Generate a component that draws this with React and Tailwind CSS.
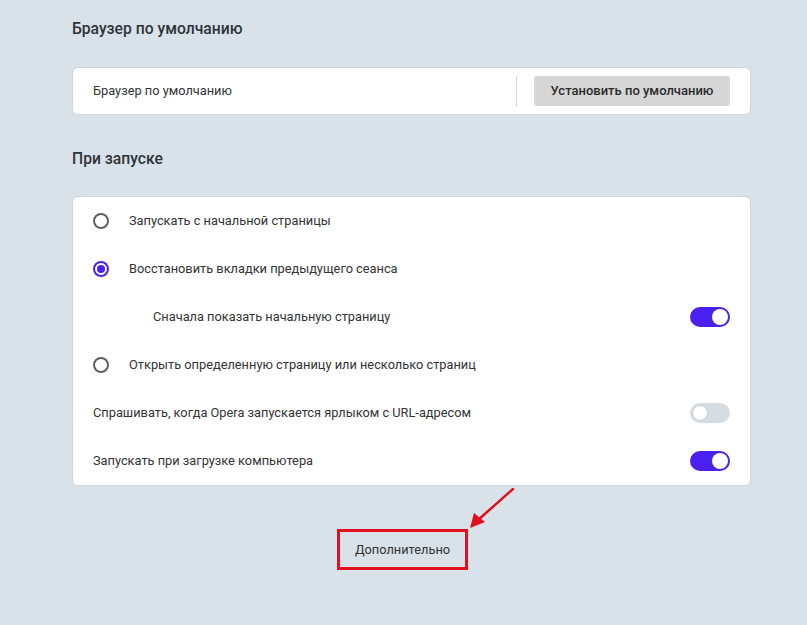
import React from "react";

function Radio({ checked }) {
  return (
    <span
      className={
        "flex items-center justify-center w-[16px] h-[16px] rounded-full border-2 " +
        (checked ? "border-[#4b22ec]" : "border-[#5f5f5f]")
      }
    >
      {checked && <span className="w-[8px] h-[8px] rounded-full bg-[#4b22ec]" />}
    </span>
  );
}

function Toggle({ on }) {
  return (
    <span
      className={
        "flex items-center w-[40px] h-[20px] rounded-full px-[2px] " +
        (on ? "bg-[#4a1ff0] justify-end" : "bg-[#d5dce2] justify-start")
      }
    >
      <span
        className={
          "w-[16px] h-[16px] rounded-full bg-white " +
          (on ? "" : "border border-[#c9d0d6]")
        }
      />
    </span>
  );
}

function Row({ children, right }) {
  return (
    <div className="h-[48px] flex items-center pr-[20px]">
      <div className="flex-1 flex items-center">{children}</div>
      {right}
    </div>
  );
}

export default function App() {
  return (
    <div
      className="relative w-[807px] h-[625px] bg-[#d9e2e9] text-[#333] overflow-hidden"
      style={{ fontFamily: 'Roboto, "Noto Sans", sans-serif' }}
    >
      <div className="ml-[72px] w-[679px] pt-[18px]">
        <h2 className="text-[15.7px] leading-[22px] font-medium text-[#2f3338]">
          Браузер по умолчанию
        </h2>
        <div className="mt-[27px] h-[48px] bg-white rounded-[6px] border border-[#cfd6dc] flex items-center pl-[20px] pr-[20px]">
          <span className="flex-1 text-[12.8px]">Браузер по умолчанию</span>
          <span className="w-px h-[31px] bg-[#d4d4d4] mr-[17px]" />
          <button className="h-[30px] w-[196px] rounded-[3px] bg-[#d6d6d6] text-[13px] font-medium text-[#2b2b2b]">
            Установить по умолчанию
          </button>
        </div>

        <h2 className="mt-[33px] text-[15.7px] leading-[22px] font-medium text-[#2f3338]">
          При запуске
        </h2>
        <div className="mt-[26px] bg-white rounded-[6px] border border-[#cfd6dc] text-[12.8px]">
          <Row>
            <span className="ml-[20px]"><Radio /></span>
            <span className="ml-[20px]">Запускать с начальной страницы</span>
          </Row>
          <Row>
            <span className="ml-[20px]"><Radio checked /></span>
            <span className="ml-[20px]">Восстановить вкладки предыдущего сеанса</span>
          </Row>
          <Row right={<Toggle on />}>
            <span className="ml-[80px]">Сначала показать начальную страницу</span>
          </Row>
          <Row>
            <span className="ml-[20px]"><Radio /></span>
            <span className="ml-[20px]">Открыть определенную страницу или несколько страниц</span>
          </Row>
          <Row right={<Toggle />}>
            <span className="ml-[20px]">Спрашивать, когда Opera запускается ярлыком с URL-адресом</span>
          </Row>
          <Row right={<Toggle on />}>
            <span className="ml-[20px]">Запускать при загрузке компьютера</span>
          </Row>
        </div>

        <div className="flex justify-center mt-[43px] pr-[18px]">
          <div className="w-[131px] h-[41px] border-[3px] border-[#e0101e] flex items-center justify-center text-[12.8px]">
            Дополнительно
          </div>
        </div>
      </div>

      <svg className="absolute left-0 top-0 pointer-events-none" width="807" height="625">
        <line x1="513" y1="489" x2="478" y2="520" stroke="#e0101e" strokeWidth="2.5" strokeLinecap="round" />
        <polygon points="470,528 474,513 485,522" fill="#e0101e" />
      </svg>
    </div>
  );
}
